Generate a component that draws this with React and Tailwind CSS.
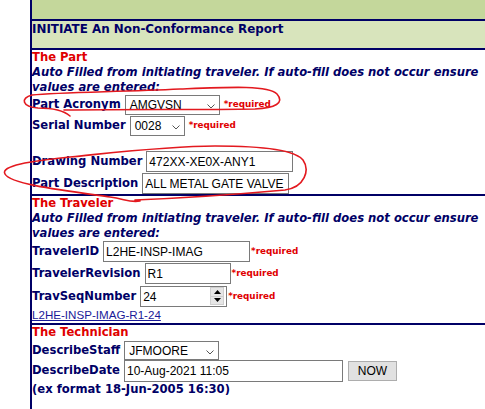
import React from 'react';

// small pieces of the old-style form
const Label = ({ children }) => (
  <span className="font-bold text-[#000066] whitespace-nowrap">{children}</span>
);

const Required = ({ gap }) => (
  <span className={`${gap ? 'ml-[4px]' : 'ml-px'} text-[8.8px] font-bold text-[#e00000] whitespace-nowrap`}>*required</span>
);

const Chevron = () => (
  <svg
    width="8"
    height="5"
    viewBox="0 0 8 5"
    className="absolute right-[4px] top-[8px] pointer-events-none"
  >
    <path d="M0.5 0.5 L4 4 L7.5 0.5" fill="none" stroke="#555" strokeWidth="1" />
  </svg>
);

const Select = ({ value, className }) => (
  <div
    className={`relative ml-1 h-full border border-[#7a7a7a] bg-white font-['Liberation_Sans',Arial,sans-serif] text-[12px] text-black flex items-center pl-[4px] ${className}`}
  >
    {value}
    <Chevron />
  </div>
);

const TextBox = ({ value, className }) => (
  <input
    readOnly
    defaultValue={value}
    className={`ml-1 h-full border border-[#7a7a7a] bg-white px-[2px] font-['Liberation_Sans',Arial,sans-serif] text-[12px] text-black outline-none ${className}`}
  />
);

const Spinner = () => (
  <div className="absolute right-[3px] top-[1px] flex flex-col w-[14px] h-[18px] pointer-events-none">
    <div className="flex-1 bg-[#e6e6e6] border border-[#cfcfcf] flex items-center justify-center">
      <svg width="7" height="4" viewBox="0 0 7 4">
        <path d="M0 4 L3.5 0 L7 4 Z" fill="#000" />
      </svg>
    </div>
    <div className="flex-1 bg-[#e6e6e6] border border-[#cfcfcf] border-t-0 flex items-center justify-center">
      <svg width="7" height="4" viewBox="0 0 7 4">
        <path d="M0 0 L3.5 4 L7 0 Z" fill="#000" />
      </svg>
    </div>
  </div>
);

const Heading = ({ children }) => (
  <div className="h-[15px] leading-[15px] font-bold text-[#e00000] whitespace-nowrap">{children}</div>
);

const AutoNote = () => (
  <div className="leading-[15px] font-bold italic text-[#000066] whitespace-nowrap">
    Auto Filled from initiating traveler. If auto-fill does not occur ensure
    <br />
    values are entered:
  </div>
);

export default function App() {
  return (
    <div className="relative w-[485px] h-[409px] overflow-hidden bg-white font-['DejaVu_Sans',Verdana,sans-serif] text-[11.6px]">
      <div className="ml-[30px] h-full border-l-2 border-[#000066]">
        {/* green header bands */}
        <div className="h-[21px] bg-[#c4d79b] border-b-2 border-[#000066]" />
        <div className="h-[29px] bg-[#d8e4bc] border-b-2 border-[#000066] pt-px leading-[15px] text-[11.9px] font-bold text-[#000066] whitespace-nowrap">
          INITIATE An Non-Conformance Report
        </div>

        {/* The Part */}
        <div className="h-[146px] border-b-2 border-[#000066]">
          <Heading>The Part</Heading>
          <AutoNote />
          <div className="flex items-center h-[20px]">
            <Label>Part Acronym</Label>
            <Select value="AMGVSN" className="w-[95px]" />
            <Required gap />
          </div>
          <div className="flex items-center h-[20px] mt-px">
            <Label>Serial Number</Label>
            <Select value="0028" className="w-[55px]" />
            <Required gap />
          </div>
          <div className="flex items-center h-[21px] mt-[15px]">
            <Label>Drawing Number</Label>
            <TextBox value="472XX-XE0X-ANY1" className="w-[147px]" />
          </div>
          <div className="flex items-center h-[21px] mt-px">
            <Label>Part Description</Label>
            <TextBox value="ALL METAL GATE VALVE" className="w-[147px]" />
          </div>
        </div>

        {/* The Traveler */}
        <div className="h-[129px] border-b-2 border-[#000066]">
          <Heading>The Traveler</Heading>
          <AutoNote />
          <div className="flex items-center h-[21px]">
            <Label>TravelerID</Label>
            <TextBox value="L2HE-INSP-IMAG" className="w-[147px]" />
            <Required />
          </div>
          <div className="flex items-center h-[21px] mt-px">
            <Label>TravelerRevision</Label>
            <TextBox value="R1" className="w-[86px]" />
            <Required />
          </div>
          <div className="flex items-center h-[21px] mt-[2px]">
            <Label>TravSeqNumber</Label>
            <div className="relative h-full">
              <TextBox value="24" className="w-[87px]" />
              <Spinner />
            </div>
            <Required />
          </div>
          <div className="h-[16px] leading-[16px] font-['Liberation_Sans',Arial,sans-serif] text-[#1a1a99] underline">
            L2HE-INSP-IMAG-R1-24
          </div>
        </div>

        {/* The Technician */}
        <div>
          <Heading>The Technician</Heading>
          <div className="flex items-center h-[19px] mt-px">
            <Label>DescribeStaff</Label>
            <Select value="JFMOORE" className="w-[95px]" />
          </div>
          <div className="flex items-center h-[22px]">
            <Label>DescribeDate</Label>
            <TextBox value="10-Aug-2021 11:05" className="w-[219px]" />
            <button className="ml-[5px] w-[49px] h-[20px] bg-[#e1e1e1] border border-[#adadad] font-['Liberation_Sans',Arial,sans-serif] text-[12px] text-black">
              NOW
            </button>
          </div>
          <div className="leading-[15px] font-bold text-[#000066] whitespace-nowrap">
            (ex format 18-Jun-2005 16:30)
          </div>
        </div>
      </div>

      {/* hand-drawn red annotations over the screenshot */}
      <svg
        className="absolute inset-0 pointer-events-none"
        width="485"
        height="409"
        viewBox="0 0 485 409"
      >
        <path
          d="M70 116 C62 109 50 108 38 108 C22 107 20 98 32 95 C60 92 120 92 180 89 C230 87 268 85 277 94 C285 103 275 108 255 109 C200 110 130 109 64 110"
          fill="none"
          stroke="#e3191f"
          strokeWidth="1.6"
          strokeLinecap="round"
        />
        <path
          d="M135 200 C160 199 230 195 285 190 C305 187 310 170 303 160 C295 150 260 146 215 146 C170 146 120 152 70 157 C30 161 0 166 5 174 C10 184 60 190 110 197 C125 199 130 203 140 201"
          fill="none"
          stroke="#e3191f"
          strokeWidth="1.6"
          strokeLinecap="round"
        />
      </svg>
    </div>
  );
}
